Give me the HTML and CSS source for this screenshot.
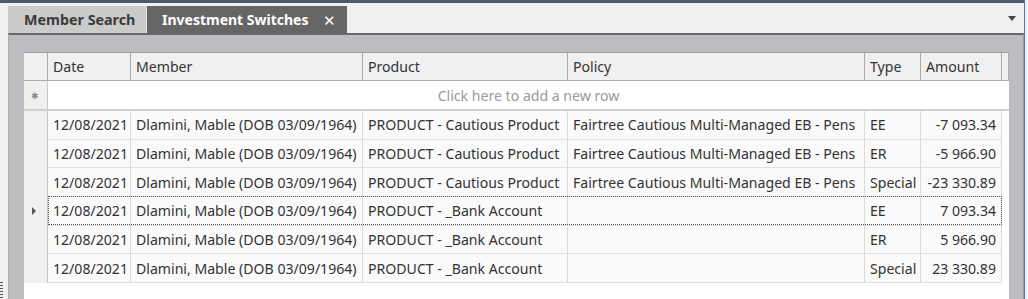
FILE: index.html
```html
<!DOCTYPE html>
<html lang="en">
<head>
  <meta charset="UTF-8">
  <title>Investment Switches</title>
  <link rel="stylesheet" href="styles.css">
</head>
<body>
  <div class="grip"></div>
  <div class="frame">
    <div class="topbar"></div>
    <div class="tabstrip">
      <div class="tab">Member Search</div>
      <div class="tab active">Investment Switches <span class="close">&#x2715;</span></div>
      <div class="dropdown"></div>
    </div>
    <div class="panel">
      <div class="grid">
        <div class="row head">
          <div class="rh"></div>
          <div class="c">Date</div>
          <div class="c">Member</div>
          <div class="c">Product</div>
          <div class="c">Policy</div>
          <div class="c">Type</div>
          <div class="c">Amount</div>
          <div class="c filler"></div>
        </div>
        <div class="row newrow">
          <div class="rh"><span class="star">&#x2731;</span></div>
          <div class="hint">Click here to add a new row</div>
        </div>
        <div class="row">
          <div class="rh"></div>
          <div class="c">12/08/2021</div>
          <div class="c">Dlamini, Mable (DOB 03/09/1964)</div>
          <div class="c">PRODUCT - Cautious Product</div>
          <div class="c">Fairtree Cautious Multi-Managed EB - Pens</div>
          <div class="c">EE</div>
          <div class="c num">-7 093.34</div>
          <div class="c filler"></div>
        </div>
        <div class="row">
          <div class="rh"></div>
          <div class="c">12/08/2021</div>
          <div class="c">Dlamini, Mable (DOB 03/09/1964)</div>
          <div class="c">PRODUCT - Cautious Product</div>
          <div class="c">Fairtree Cautious Multi-Managed EB - Pens</div>
          <div class="c">ER</div>
          <div class="c num">-5 966.90</div>
          <div class="c filler"></div>
        </div>
        <div class="row">
          <div class="rh"></div>
          <div class="c">12/08/2021</div>
          <div class="c">Dlamini, Mable (DOB 03/09/1964)</div>
          <div class="c">PRODUCT - Cautious Product</div>
          <div class="c">Fairtree Cautious Multi-Managed EB - Pens</div>
          <div class="c">Special</div>
          <div class="c num">-23 330.89</div>
          <div class="c filler"></div>
        </div>
        <div class="row current">
          <div class="rh"><span class="arrow"></span></div>
          <div class="c">12/08/2021</div>
          <div class="c">Dlamini, Mable (DOB 03/09/1964)</div>
          <div class="c">PRODUCT - _Bank Account</div>
          <div class="c"></div>
          <div class="c">EE</div>
          <div class="c num">7 093.34</div>
          <div class="c filler"></div>
        </div>
        <div class="row">
          <div class="rh"></div>
          <div class="c">12/08/2021</div>
          <div class="c">Dlamini, Mable (DOB 03/09/1964)</div>
          <div class="c">PRODUCT - _Bank Account</div>
          <div class="c"></div>
          <div class="c">ER</div>
          <div class="c num">5 966.90</div>
          <div class="c filler"></div>
        </div>
        <div class="row">
          <div class="rh"></div>
          <div class="c">12/08/2021</div>
          <div class="c">Dlamini, Mable (DOB 03/09/1964)</div>
          <div class="c">PRODUCT - _Bank Account</div>
          <div class="c"></div>
          <div class="c">Special</div>
          <div class="c num">23 330.89</div>
          <div class="c filler"></div>
        </div>
      </div>
    </div>
  </div>
</body>
</html>
```

FILE: styles.css
```css
body {
  margin: 0;
  background-color: #f0f0f0;
  font-family: "Noto Sans", "Open Sans", sans-serif;
  font-size: 14.1px;
  color: #333;
  overflow: hidden;
}
.frame {
  width: 1024px;
  height: 299px;
  border-right: 1px solid #3b7fc8;
  display: flex;
  flex-direction: column;
}
.topbar {
  height: 3px;
  background-color: #4b5a66;
}
.tabstrip {
  height: 30px;
  display: flex;
  align-items: flex-end;
  padding-left: 8px;
}
.tab {
  height: 27px;
  display: flex;
  align-items: center;
  padding: 0 10px 0 16px;
  width: 139px;
  box-sizing: border-box;
  background-color: #cbcbcb;
  color: #3a3a3a;
  font-weight: bold;
  font-size: 14.3px;
  white-space: nowrap;
  border-right: 1px solid #e6e6e6;
}
.tab.active {
  width: 200px;
  padding-left: 15px;
  font-size: 14px;
  background-color: #666;
  color: #fff;
  border-right: none;
}
.close {
  margin-left: auto;
  font-weight: normal;
  font-size: 15px;
  padding-right: 1px;
}
.dropdown {
  margin-left: auto;
  margin-right: 8px;
  align-self: center;
  width: 0;
  height: 0;
  border-left: 4px solid transparent;
  border-right: 4px solid transparent;
  border-top: 5px solid #444;
}
.panel {
  flex: 1;
  margin-left: 8px;
  border-top: 2px solid #686868;
  border-left: 1px solid #a9abaf;
  border-right: 1px solid #9a9ca0;
  background-color: #bcbdc1;
  padding: 17px 14px 0 15px;
  display: flex;
  flex-direction: column;
}
.grid {
  flex: 1;
  background-color: #fff;
  border-top: 1px solid #a0a0a0;
}
.row {
  display: grid;
  grid-template-columns: 24px 83px 232px 205px 297px 56px 81px 7px;
  height: 28.67px;
  box-sizing: border-box;
  position: relative;
}
.c {
  display: flex;
  align-items: center;
  padding: 0 5px;
  white-space: nowrap;
  overflow: hidden;
  background-color: #fafafa;
  border-right: 1px solid #dadada;
  border-bottom: 1px solid #e0e0e0;
}
.c.num {
  justify-content: flex-end;
}
.c.filler {
  background-color: #fff;
  border: none;
  padding: 0;
}
.rh {
  background-color: #f0f0f0;
  border-right: 1px solid #c8c8c8;
  display: flex;
  align-items: center;
  justify-content: center;
}
.head {
  height: 28px;
}
.head .c {
  background-color: #f0f0f0;
  border-right: 1px solid #ababab;
  border-bottom: 1px solid #ababab;
}
.head .rh {
  border-right: 1px solid #ababab;
  border-bottom: 1px solid #ababab;
}
.head .c.filler {
  background-color: #f0f0f0;
  border-bottom: 1px solid #ababab;
}
.newrow {
  grid-template-columns: 24px 961px;
  height: 30px;
  border-bottom: 2px solid #cfcfcf;
}
.hint {
  display: flex;
  align-items: center;
  justify-content: center;
  color: #9a9a9a;
  background-color: #fff;
}
.star {
  color: #8a8a8a;
  font-size: 9px;
  margin-right: 2px;
}
.arrow {
  width: 0;
  height: 0;
  border-top: 4px solid transparent;
  border-bottom: 4px solid transparent;
  border-left: 4px solid #555;
  margin-right: 3px;
}
.current::after {
  content: "";
  position: absolute;
  left: 24px;
  top: -1px;
  width: 954px;
  height: 29px;
  box-sizing: border-box;
  border: 1px dotted #555;
}
.grip {
  position: absolute;
  left: 0;
  top: 282px;
  width: 3px;
  height: 17px;
  background: repeating-linear-gradient(to bottom, #555 0 1px, transparent 1px 3px);
}
```
